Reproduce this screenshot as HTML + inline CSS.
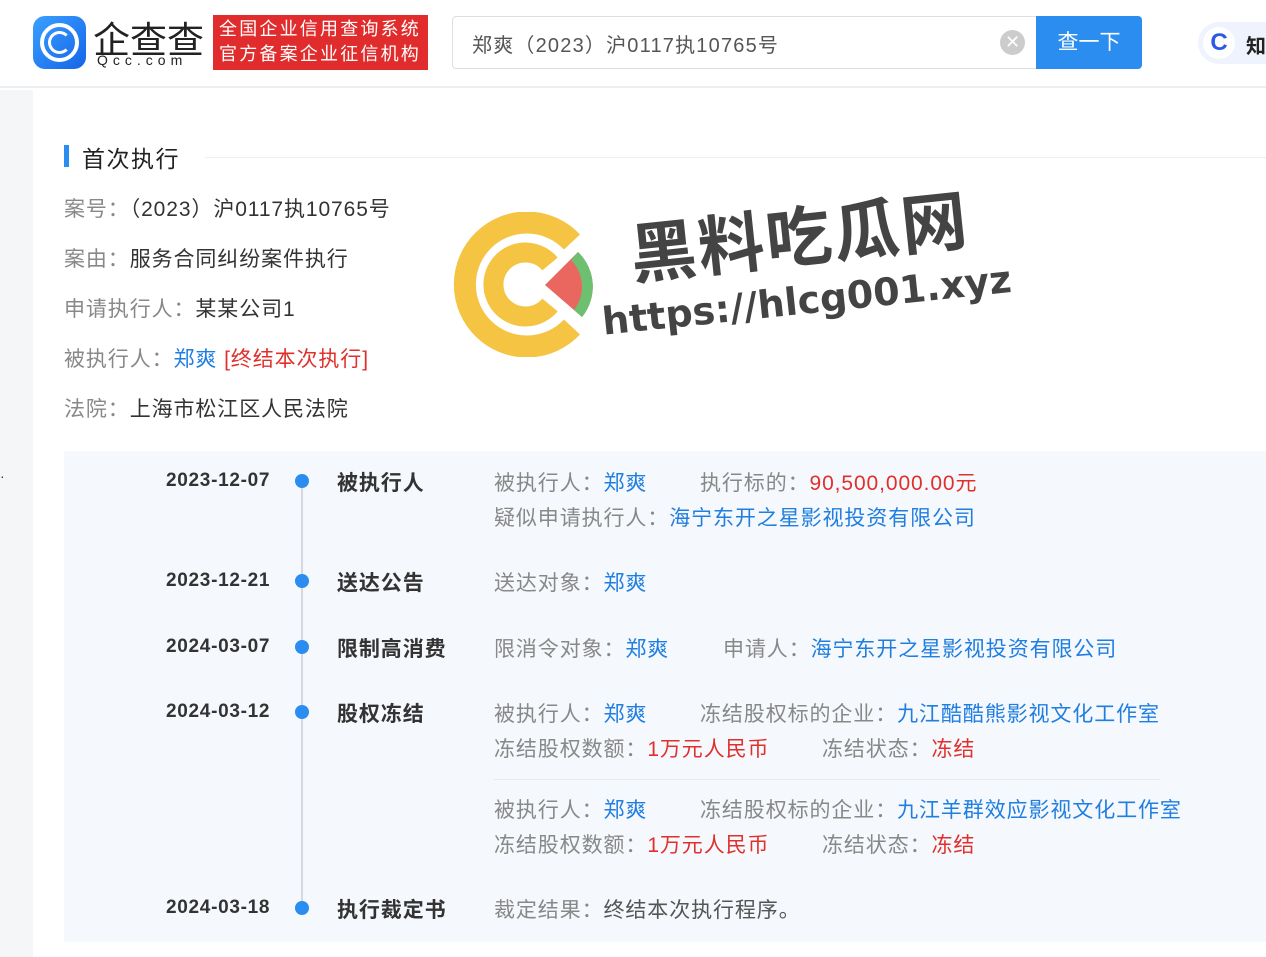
<!DOCTYPE html>
<html><head><meta charset="utf-8"><style>
*{margin:0;padding:0;box-sizing:border-box}
body{width:1266px;height:957px;overflow:hidden;background:#fff;font-family:"Liberation Sans","Noto Sans CJK SC",sans-serif;position:relative;color:#333}
.a{position:absolute;white-space:nowrap}
.g{color:#888}.b{color:#1f7ee0}.r{color:#e0302c}
.t{font-size:21px;letter-spacing:0.9px}
.d{font-size:19px;font-weight:bold;letter-spacing:0.7px}
</style></head><body>
<div class="a" style="left:0;top:0;width:1266px;height:88px;background:#fff;border-bottom:2px solid #eceef2"></div>
<div class="a" style="left:0;top:90px;width:33px;height:867px;background:#f5f6f8"></div>
<!-- logo -->
<div class="a" style="left:33px;top:16px;width:53px;height:53px;border-radius:12px;background:linear-gradient(135deg,#3aa0ff,#1565e8)"></div>
<div class="a" style="left:40px;top:23px;width:39px;height:39px;border-radius:50%;border:4px solid #fff"></div>
<div class="a" style="left:48px;top:31px;width:23px;height:23px;border-radius:50%;border:3px solid #fff;border-right-color:transparent"></div>
<div class="a" style="left:93px;top:10px;font-size:37px;color:#222;letter-spacing:0px">企查查</div>
<div class="a" style="left:97px;top:52px;font-size:14px;color:#222;letter-spacing:5px">Qcc.com</div>
<div class="a" style="left:213px;top:15px;width:215px;height:55px;background:#e02c2c;color:#fff;font-size:18px;line-height:25px;padding:2px 0 0 6px;letter-spacing:2.2px">全国企业信用查询系统<br>官方备案企业征信机构</div>
<div class="a" style="left:452px;top:16px;width:586px;height:53px;border:1px solid #dcdfe6;border-radius:4px 0 0 4px"></div>
<div class="a" style="left:472px;top:29px;font-size:20px;color:#555;letter-spacing:1.2px">郑爽（2023）沪0117执10765号</div>
<div class="a" style="left:1000px;top:30px;width:25px;height:25px;border-radius:50%;background:#ccc;color:#fff;font-size:18px;text-align:center;line-height:25px">✕</div>
<div class="a" style="left:1036px;top:16px;width:106px;height:53px;background:#2b8df0;border-radius:0 4px 4px 0;color:#fff;font-size:21px;text-align:center;line-height:53px">查一下</div>
<div class="a" style="left:1198px;top:22px;width:90px;height:42px;border-radius:21px;background:#eef3fd"></div>
<div class="a" style="left:1203px;top:27px;width:32px;height:32px;border-radius:50%;background:#fff;color:#2a5be8;font-weight:bold;font-size:24px;text-align:center;line-height:32px">C</div>
<div class="a" style="left:1246px;top:30px;font-size:20px;font-weight:bold;color:#222">知</div>
<!-- section -->
<div class="a" style="left:64px;top:145px;width:5px;height:22px;background:#2b8df0"></div>
<div class="a" style="left:82px;top:140px;font-size:23px;color:#222;letter-spacing:1.5px">首次执行</div>
<div class="a" style="left:205px;top:157px;width:1061px;height:1px;background:#eceef2"></div>
<div class="a t" style="left:64px;top:193px"><span class="g">案号：</span>（2023）沪0117执10765号</div>
<div class="a t" style="left:64px;top:243px"><span class="g">案由：</span>服务合同纠纷案件执行</div>
<div class="a t" style="left:64px;top:293px"><span class="g">申请执行人：</span>某某公司1</div>
<div class="a t" style="left:64px;top:343px"><span class="g">被执行人：</span><span class="b">郑爽</span> <span class="r">[终结本次执行]</span></div>
<div class="a t" style="left:64px;top:393px"><span class="g">法院：</span>上海市松江区人民法院</div>
<div class="a" style="left:0;top:468px;font-size:14px">·</div>
<!-- timeline -->
<div class="a" style="left:64px;top:451px;width:1202px;height:491px;background:#f5f8fc"></div>
<div class="a" style="left:301px;top:485px;width:2px;height:425px;background:#d5d8de"></div>
<div class="a" style="left:295px;top:474px;width:14px;height:14px;border-radius:50%;background:#2b8df0"></div>
<div class="a" style="left:295px;top:574px;width:14px;height:14px;border-radius:50%;background:#2b8df0"></div>
<div class="a" style="left:295px;top:640px;width:14px;height:14px;border-radius:50%;background:#2b8df0"></div>
<div class="a" style="left:295px;top:705px;width:14px;height:14px;border-radius:50%;background:#2b8df0"></div>
<div class="a" style="left:295px;top:901px;width:14px;height:14px;border-radius:50%;background:#2b8df0"></div>
<div class="a d" style="left:166px;top:470px">2023-12-07</div>
<div class="a d" style="left:166px;top:570px">2023-12-21</div>
<div class="a d" style="left:166px;top:636px">2024-03-07</div>
<div class="a d" style="left:166px;top:701px">2024-03-12</div>
<div class="a d" style="left:166px;top:897px">2024-03-18</div>
<div class="a t" style="left:337px;top:467px;font-weight:bold">被执行人</div>
<div class="a t" style="left:337px;top:567px;font-weight:bold">送达公告</div>
<div class="a t" style="left:337px;top:633px;font-weight:bold">限制高消费</div>
<div class="a t" style="left:337px;top:698px;font-weight:bold">股权冻结</div>
<div class="a t" style="left:337px;top:894px;font-weight:bold">执行裁定书</div>
<div class="a t" style="left:494px;top:467px"><span class="g">被执行人：</span><span class="b">郑爽</span></div>
<div class="a t" style="left:700px;top:467px"><span class="g">执行标的：</span><span class="r">90,500,000.00元</span></div>
<div class="a t" style="left:494px;top:502px"><span class="g">疑似申请执行人：</span><span class="b">海宁东开之星影视投资有限公司</span></div>
<div class="a t" style="left:494px;top:567px"><span class="g">送达对象：</span><span class="b">郑爽</span></div>
<div class="a t" style="left:494px;top:633px"><span class="g">限消令对象：</span><span class="b">郑爽</span></div>
<div class="a t" style="left:723px;top:633px"><span class="g">申请人：</span><span class="b">海宁东开之星影视投资有限公司</span></div>
<div class="a t" style="left:494px;top:698px"><span class="g">被执行人：</span><span class="b">郑爽</span></div>
<div class="a t" style="left:700px;top:698px"><span class="g">冻结股权标的企业：</span><span class="b">九江酷酷熊影视文化工作室</span></div>
<div class="a t" style="left:494px;top:733px"><span class="g">冻结股权数额：</span><span class="r">1万元人民币</span></div>
<div class="a t" style="left:822px;top:733px"><span class="g">冻结状态：</span><span class="r">冻结</span></div>
<div class="a" style="left:494px;top:779px;width:666px;height:1px;background:#e6e9ee"></div>
<div class="a t" style="left:494px;top:794px"><span class="g">被执行人：</span><span class="b">郑爽</span></div>
<div class="a t" style="left:700px;top:794px"><span class="g">冻结股权标的企业：</span><span class="b">九江羊群效应影视文化工作室</span></div>
<div class="a t" style="left:494px;top:829px"><span class="g">冻结股权数额：</span><span class="r">1万元人民币</span></div>
<div class="a t" style="left:822px;top:829px"><span class="g">冻结状态：</span><span class="r">冻结</span></div>
<div class="a t" style="left:494px;top:894px"><span class="g">裁定结果：</span><span style="color:#555">终结本次执行程序。</span></div>
<!-- watermark -->
<svg class="a" style="left:450px;top:212px" width="150" height="145" viewBox="0 0 150 145">
<path d="M122 30 A62 62 0 1 0 122 115" fill="none" stroke="#f6c443" stroke-width="22"/>
<path d="M100 52 A32 32 0 1 0 100 93" fill="none" stroke="#f6c443" stroke-width="20"/>
<path d="M95 73 L128 40 A48 48 0 0 1 132 105 Z" fill="#e9675e"/>
<path d="M128 40 A48 48 0 0 1 132 105 L124 98 A38 38 0 0 0 121 48 Z" fill="#6cc070"/>
</svg>
<div class="a" style="left:625px;top:203px;font-size:66px;font-weight:bold;color:#444;transform:rotate(-6deg);transform-origin:left top;letter-spacing:2px;text-shadow:2px 2px 0 #fff">黑料吃瓜网</div>
<div class="a" style="left:600px;top:300px;font-size:38px;font-weight:bold;color:#444;transform:rotate(-6deg);transform-origin:left top;font-family:'DejaVu Sans',sans-serif">https://hlcg001.xyz</div>
</body></html>
